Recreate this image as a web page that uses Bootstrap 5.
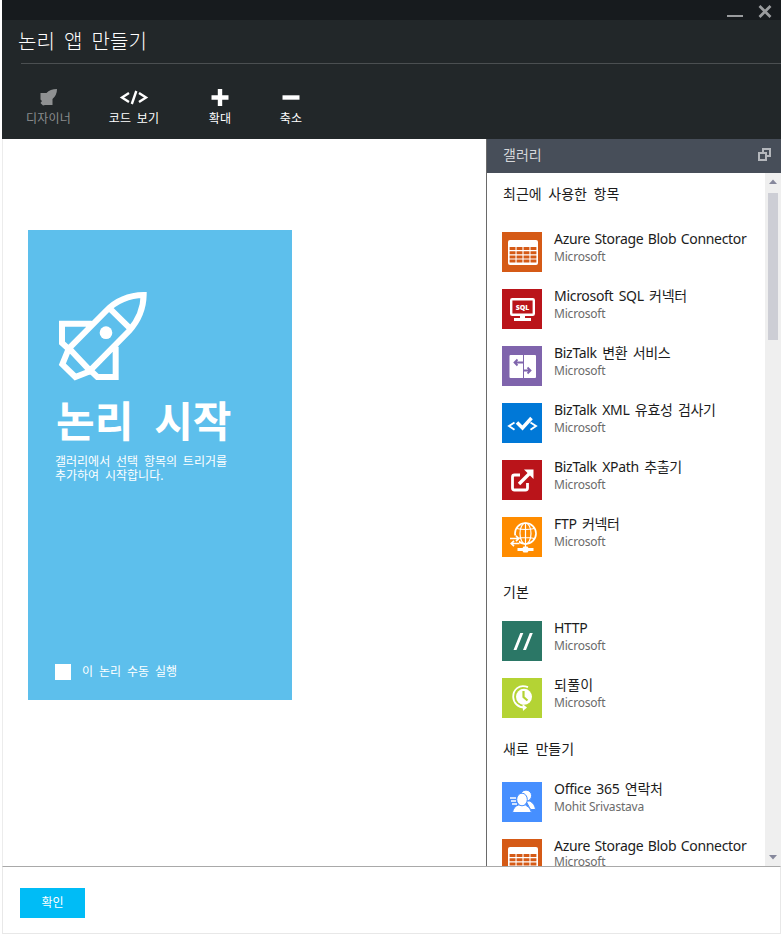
<!DOCTYPE html>
<html lang="ko">
<head>
<meta charset="utf-8">
<meta name="viewport" content="width=device-width, initial-scale=1">
<title>논리 앱 만들기</title>
<link href="https://cdn.jsdelivr.net/npm/bootstrap@5.3.0/dist/css/bootstrap.min.css" rel="stylesheet">
<style>
body{font-family:"Noto Sans","Noto Sans CJK KR",sans-serif;font-size:12px;background:#fff;color:#1c1c1c;overflow:hidden}
svg{display:block;flex:none}
.blade{width:779px;height:934px;margin-left:2px}
.blade-top{background:#222729;height:139px;color:#fff}
.title-strip{background:#171b1e;height:20px;padding:4px 9px 0 0;gap:15px}
.blade-title{font-size:20px;line-height:28px;font-weight:300;word-spacing:4px;padding:8px 0 0 16px;height:43px;margin:0}
.rule{height:1px;background:#4b4f51;margin-left:19px}
.commands{padding:24px 0 0 19px}
.cmd{line-height:16px;background:none;border:0;color:#fff;padding:0;word-spacing:2px;letter-spacing:.2px}
.cmd svg{margin:0 auto 5px}
.cmd-off{color:#8b8d8e}
.middle{height:727px}
.canvas{width:484px;border-left:1px solid #ececec;padding:91px 0 0 24.5px}
.trigger{width:264px;height:470px;background:#5dbfec;color:#fff;padding:61px 0 0 27.5px}
.trigger h2{font-size:42px;line-height:48px;font-weight:700;word-spacing:10px;margin:16px 0 0 1px}
.trigger p{line-height:14px;margin:10px 0 0;word-spacing:2.7px}
.manual{margin-bottom:20px;gap:11px;line-height:17px;word-spacing:2.8px}
.tick{width:16px;height:16px;background:#fff}
.gallery{width:295px;border-left:1px solid #6a6a6a}
.gallery-head{height:34px;background:#474e59;color:#d5d7da;font-size:14px;padding:0 10px 3px 16px}
.gallery-list{height:693px;overflow:hidden;padding-left:15px}
.group{font-size:14px;line-height:20px;font-weight:400;margin:0;padding-left:1px;word-spacing:3px}
.g1{padding-top:11px;height:59px}
.g2{padding-top:8px;height:47px}
.g3{padding-top:4px;height:47px}
.entry{height:57px;gap:12px}
.entry-name{font-size:14px;line-height:21px;margin-top:-4px;white-space:nowrap;word-spacing:2px;letter-spacing:-.3px}
.latin{word-spacing:1px}
.hangul{letter-spacing:.3px}
.entry-by{line-height:16px;color:#6b6b6b;letter-spacing:-.2px}
.last .entry-by{margin-top:-2px}
.scroller{width:16px;background:#efefef;padding:6px 0}
.thumb{width:10px;height:147px;background:#cdced5;margin-top:9px}
.foot{height:68px;border:1px solid #e8e8e8;border-top-color:#a9a9a9;padding:21px 0 0 17px}
.ok{width:65px;height:30px;background:#00bcf6;color:#fff;border-radius:0;font-size:12px;line-height:28px;padding:0;border:0}
</style>
<script src="https://cdn.jsdelivr.net/npm/bootstrap@5.3.0/dist/js/bootstrap.bundle.min.js"></script>
</head>
<body>
<div class="blade d-flex flex-column">
  <header class="blade-top">
    <div class="title-strip d-flex justify-content-end">
      <svg width="16" height="14"><path d="M0 12h16" stroke="#9a9c9e" stroke-width="2"/></svg>
      <svg width="14" height="14"><path d="M1.500 2l11 11M12.500 2l-11 11" stroke="#9a9c9e" stroke-width="2.700"/></svg>
    </div>
    <h1 class="blade-title">논리 앱 만들기</h1>
    <div class="rule"></div>
    <nav class="commands d-flex">
      <button class="cmd cmd-off" style="width:55px"><svg width="18" height="18" viewBox="0 0 18 18"><path fill="#8f9192" d="M17 1Q10 1 6.500 5H.5v6.500L2 13l-1.500 2L3 17.500 5 17h7.500v-6Q17 7 17 1z"/></svg>디자이너</button>
      <button class="cmd" style="width:116px"><svg width="30" height="18"><path d="M10 5L3 9.500l7 4.500M20 5l7 4.500-7 4.500M17.300 3l-4.500 13" fill="none" stroke="#fff" stroke-width="2.400"/></svg>코드 보기</button>
      <button class="cmd" style="width:56px"><svg width="18" height="18"><path d="M.5 9.500h17M9 1v17" stroke="#fff" stroke-width="4.400"/></svg>확대</button>
      <button class="cmd" style="width:86px"><svg width="18" height="18"><path d="M.5 9.500h17" stroke="#fff" stroke-width="4.400"/></svg>축소</button>
    </nav>
  </header>
  <main class="middle d-flex">
    <section class="canvas">
      <div class="trigger d-flex flex-column">
        <svg width="90" height="90" viewBox="114 213 270 270" style="margin-left:3px" fill="none" stroke="#fff" stroke-width="18"><path d="M147 385L258 273Q304 226 371 225Q370 285 327 333L210 452zM272 268L330 325M215 311H126V369L147 388M287 380V471H232L208 448M145 389L127 433L166 471L212 453"/><circle cx="258" cy="338" r="19" fill="#fff" stroke="none"/></svg>
        <h2>논리 시작</h2>
        <p>갤러리에서 선택 항목의 트리거를<br>추가하여 시작합니다.</p>
        <label class="manual d-flex align-items-center mt-auto"><span class="tick"></span>이 논리 수동 실행</label>
      </div>
    </section>
    <aside class="gallery">
      <div class="gallery-head d-flex justify-content-between align-items-center"><span>갤러리</span>
        <svg width="13" height="13" fill="none" stroke="#b4b7bc" stroke-width="2"><path d="M1 5h7v7H1zM5 5V1h7v7H8"/></svg></div>
      <div class="d-flex">
        <div class="gallery-list flex-grow-1">
          <h3 class="group g1">최근에 사용한 항목</h3>
          <div class="entry d-flex"><svg width="40" height="40"><path fill="#d55a16" d="M0 0h40v40H0z"/><rect x="6" y="8" width="30" height="25" rx="2" fill="#fff"/><path d="M7.600 16.500h26.800M7.600 20.700h26.800M7.600 24.900h26.800M7.600 29.100h26.800" stroke="#d55a16" stroke-width="3" stroke-dasharray="5.900 1.070"/></svg><div><div class="entry-name latin">Azure Storage Blob Connector</div><div class="entry-by">Microsoft</div></div></div>
          <div class="entry d-flex"><svg width="40" height="40"><path fill="#ba141a" d="M0 0h40v40H0z"/><rect x="9.200" y="10.200" width="22.600" height="15.600" rx="1" fill="none" stroke="#fff" stroke-width="2.400"/><path fill="#fff" d="M18 26h5v3h6v3H12v-3h6z"/><text x="20.500" y="21" text-anchor="middle" font-family="Open Sans,sans-serif" font-weight="800" font-size="7" fill="#fff">SQL</text></svg><div><div class="entry-name">Microsoft SQL 커넥터</div><div class="entry-by">Microsoft</div></div></div>
          <div class="entry d-flex"><svg width="40" height="40"><path fill="#7f64ac" d="M0 0h40v40H0z"/><rect x="7.500" y="9" width="26.500" height="23" rx="1" fill="#fff"/><path d="M21.500 9v23" stroke="#7f64ac"/><path d="M21 16.500h-8M15.500 13.500l-3 3 3 3M21 24.500h7M25.500 21.500l3 3-3 3" fill="none" stroke="#7f64ac" stroke-width="1.800"/></svg><div><div class="entry-name">BizTalk 변환 서비스</div><div class="entry-by">Microsoft</div></div></div>
          <div class="entry d-flex"><svg width="40" height="40"><path fill="#0078d7" d="M0 0h40v40H0z"/><g fill="none" stroke="#fff"><path d="M12.500 19.500L7 23l5.500 3.700M28.500 19.500L34 23l-5.500 3.700" stroke-width="1.900"/><path d="M15 19.500l5.500 5.500 9-10" stroke-width="3.500"/></g></svg><div><div class="entry-name">BizTalk XML 유효성 검사기</div><div class="entry-by">Microsoft</div></div></div>
          <div class="entry d-flex"><svg width="40" height="40"><path fill="#ba141a" d="M0 0h40v40H0z"/><g fill="none" stroke="#fff" stroke-width="2.800"><path d="M18 15h-5.500q-2 0-2 2v11q0 2 2 2h11q2 0 2-2v-5"/><path d="M17 24l11-11" stroke-width="3.400"/></g><path fill="#fff" d="M22 9.500h9.500V19z"/></svg><div><div class="entry-name">BizTalk XPath 추출기</div><div class="entry-by">Microsoft</div></div></div>
          <div class="entry d-flex"><svg width="40" height="40"><path fill="#ff8c00" d="M0 0h40v40H0z"/><g fill="none" stroke="#fff" stroke-width="1.200"><circle cx="23.500" cy="16.500" r="10.500" stroke-width="1.700"/><ellipse cx="23.500" cy="16.500" rx="5.500" ry="10.500"/><path d="M23.500 6v26M14.500 11.500q9 2 18 0M14.500 21.500q9-2 18 0"/></g><path d="M6 18.500h11v10H6z" fill="#ff8c00"/><path d="M8 21.500h9M14 18.800l2.800 2.700-2.800 2.700M17.500 26.500H9M12 23.800l-2.800 2.700 2.800 2.700" fill="none" stroke="#fff" stroke-width="1.600"/><path fill="#fff" d="M15.500 31h5l1-1.500h4l1 1.500h5v3h-5l-1 1.500h-4l-1-1.500h-5z"/></svg><div><div class="entry-name">FTP 커넥터</div><div class="entry-by">Microsoft</div></div></div>
          <h3 class="group g2">기본</h3>
          <div class="entry d-flex"><svg width="40" height="40"><path fill="#2b7766" d="M0 0h40v40H0z"/><path fill="#fff" d="M18.300 12h3L14.500 29h-3zM27.800 12h3L24 29h-3z"/></svg><div><div class="entry-name">HTTP</div><div class="entry-by">Microsoft</div></div></div>
          <div class="entry d-flex"><svg width="40" height="40"><path fill="#b4d334" d="M0 0h40v40H0z"/><circle cx="22" cy="18.800" r="8" fill="#fff"/><path d="M21.500 13v6l4 3.500" fill="none" stroke="#b4d334" stroke-width="2.200"/><path d="M26 9.200C17 5.500 11 12 11.200 19c.2 6 5 10.500 11.300 10.500" fill="none" stroke="#fff" stroke-width="1.800"/><path fill="#fff" d="M20.500 26l4.500 3.500-4 3.500z"/></svg><div><div class="entry-name hangul">되풀이</div><div class="entry-by">Microsoft</div></div></div>
          <h3 class="group g3">새로 만들기</h3>
          <div class="entry d-flex"><svg width="40" height="40"><path fill="#468fff" d="M0 0h40v40H0z"/><g fill="#fff" stroke="#468fff" stroke-width="1"><circle cx="24" cy="13.700" r="5.600"/><path d="M24 19l4 0q5 3 5.500 8.500h-5z"/><path d="M10.500 30.500q1-6 6-7.500h7q5 2 6 7.500z"/><ellipse cx="20" cy="17.500" rx="5.300" ry="6.300"/></g><path d="M8 16h6M9 19h5M10 22h5" stroke="#fff" stroke-width="1.400"/></svg><div><div class="entry-name">Office 365 연락처</div><div class="entry-by">Mohit Srivastava</div></div></div>
          <div class="entry last d-flex"><svg width="40" height="40"><path fill="#d55a16" d="M0 0h40v40H0z"/><rect x="6" y="8" width="30" height="25" rx="2" fill="#fff"/><path d="M7.600 16.500h26.800M7.600 20.700h26.800M7.600 24.900h26.800M7.600 29.100h26.800" stroke="#d55a16" stroke-width="3" stroke-dasharray="5.900 1.070"/></svg><div><div class="entry-name latin">Azure Storage Blob Connector</div><div class="entry-by">Microsoft</div></div></div>
        </div>
        <div class="scroller d-flex flex-column align-items-center">
          <svg width="8" height="5"><path fill="#86889c" d="M0 5l4-4.500L8 5z"/></svg>
          <div class="thumb"></div>
          <svg class="mt-auto" width="8" height="5"><path fill="#86889c" d="M0 0h8L4 4.500z"/></svg>
        </div>
      </div>
    </aside>
  </main>
  <footer class="foot"><button class="btn ok">확인</button></footer>
</div>
</body>
</html>
